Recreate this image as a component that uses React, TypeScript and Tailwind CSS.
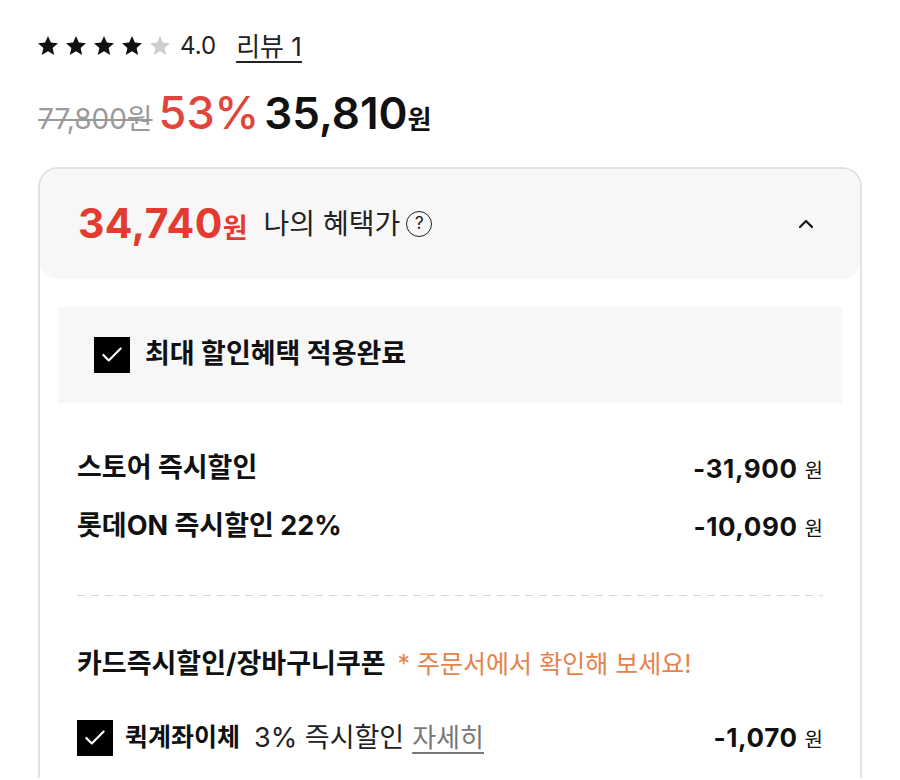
import { Check, ChevronUp } from 'lucide-react';

const FONT = 'font-[Inter,"Noto_Sans_CJK_KR",sans-serif]';

function Star({ filled }: { filled: boolean }) {
  return (
    <svg viewBox="0 0 24 24" className="h-[22px] w-[22px]">
      <path
        d="M12 1.2l3.2 7.1 7.7.75-5.85 5.1 1.75 7.6L12 17.7l-6.8 4.05 1.75-7.6L1.1 9.05l7.7-.75z"
        fill={filled ? '#111' : '#cfcfcf'}
      />
    </svg>
  );
}

function CheckBox() {
  return (
    <span className="flex h-[36px] w-[36px] shrink-0 items-center justify-center bg-black">
      <Check className="h-[26px] w-[26px] text-white" strokeWidth={2} />
    </span>
  );
}

function Amount({ value }: { value: string }) {
  return (
    <span className="flex items-baseline gap-[7px] text-[#111]">
      <span className="text-[26px] font-bold tracking-[0.6px]">{value}</span>
      <span className="text-[20px]">원</span>
    </span>
  );
}

export default function App() {
  return (
    <div className={`${FONT} min-h-[780px] bg-white px-[38px] pt-[31px] text-[#111]`}>
      <div className="flex h-[30px] items-center">
        <div className="flex items-center gap-[6px] -ml-[1px]">
          <Star filled />
          <Star filled />
          <Star filled />
          <Star filled />
          <Star filled={false} />
        </div>
        <span className="ml-[9px] text-[24px] text-[#222]">4.0</span>
        <span className="ml-[20px] text-[26px] text-[#222] underline decoration-[1.5px] underline-offset-[5px]">
          리뷰 1
        </span>
      </div>

      <div className="mt-[18px] flex items-baseline">
        <span className="text-[28px] text-[#9a9a9a] line-through decoration-[1.5px]">77,800원</span>
        <span className="ml-[6px] text-[45px] font-medium text-[#e0443a]">53%</span>
        <span className="ml-[5px] text-[44px] font-semibold">35,810</span>
        <span className="text-[26px] font-semibold">원</span>
      </div>

      <div className="mt-[20px] overflow-hidden rounded-t-[20px] border-[2px] border-b-0 border-[#e2e2e2] pb-[20px]">
        <div className="flex h-[110px] items-center rounded-[18px] bg-[#f7f7f7] pl-[38px] pr-[42px]">
          <span className="flex items-baseline text-[#e33b30]">
            <span className="text-[41px] font-bold tracking-[0.4px]">34,740</span>
            <span className="text-[27px] font-bold">원</span>
          </span>
          <span className="ml-[16px] text-[28px] text-[#222]">나의 혜택가</span>
          <span className="ml-[6px] flex h-[26px] w-[26px] items-center justify-center rounded-full border-[1.5px] border-[#222] text-[17px] leading-none">
            ?
          </span>
          <ChevronUp className="ml-auto h-[24px] w-[24px] text-[#111]" strokeWidth={2.2} />
        </div>

        <div className="px-[18px] pt-[28px]">
          <div className="flex h-[96px] items-center gap-[15px] bg-[#f7f7f7] pl-[36px]">
            <CheckBox />
            <span className="text-[27px] font-bold">최대 할인혜택 적용완료</span>
          </div>
        </div>

        <div className="px-[37px]">
          <div className="mt-[46px] flex h-[40px] items-center justify-between">
            <span className="text-[27px] font-bold">스토어 즉시할인</span>
            <Amount value="-31,900" />
          </div>
          <div className="mt-[18px] flex h-[40px] items-center justify-between">
            <span className="text-[27px] font-bold">롯데ON 즉시할인 22%</span>
            <Amount value="-10,090" />
          </div>

          <div className="mt-[48px] h-px bg-[repeating-linear-gradient(to_right,#d6d6d6_0_8px,transparent_8px_14px)]" />

          <div className="mt-[48px] flex h-[40px] items-baseline">
            <span className="text-[27px] font-bold">카드즉시할인/장바구니쿠폰</span>
            <span className="ml-[12px] text-[25px] text-[#e5834b]">* 주문서에서 확인해 보세요!</span>
          </div>

          <div className="mt-[34px] flex items-center">
            <CheckBox />
            <span className="ml-[12px] text-[25px] font-bold">퀵계좌이체</span>
            <span className="ml-[14px] text-[27px] text-[#222]">3% 즉시할인</span>
            <span className="ml-[8px] text-[26px] text-[#777] underline decoration-[1.5px] underline-offset-[5px]">
              자세히
            </span>
            <span className="ml-auto">
              <Amount value="-1,070" />
            </span>
          </div>
        </div>
      </div>
    </div>
  );
}
